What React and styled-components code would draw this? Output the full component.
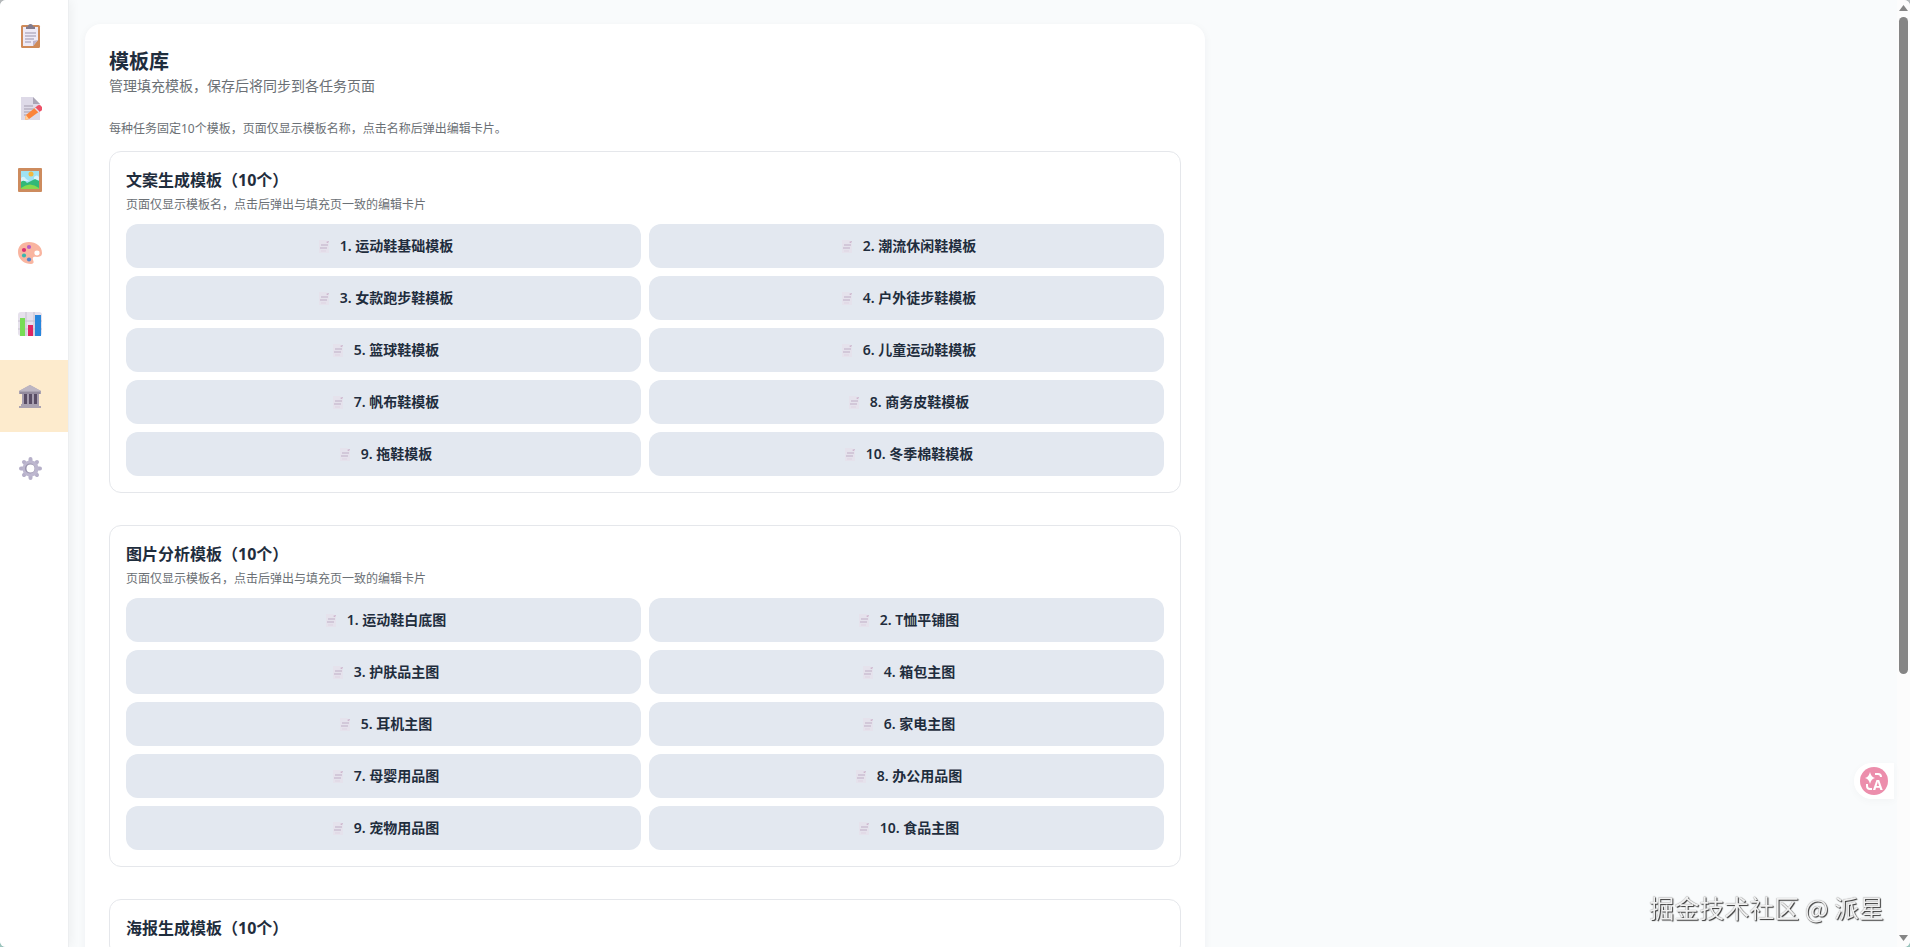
import React, { useState } from 'react';
import styled, { createGlobalStyle } from 'styled-components';

const GlobalStyle = createGlobalStyle`
  * {
    box-sizing: border-box;
  }

  body {
    margin: 0;
    background: linear-gradient(#b4b8ba 50%, #9cc4bd 50%);
    color: #1f2d3d;
    font-family: 'Noto Sans', 'Noto Sans CJK SC', sans-serif;
  }

  button {
    font-family: inherit;
  }
`;

const Layout = styled.div`
  display: flex;
  height: 100vh;
  overflow: hidden;
  border-radius: 6px;
  background: #f9fbfc;
`;

const Sidebar = styled.nav`
  display: flex;
  flex-direction: column;
  flex: none;
  width: 69px;
  background: #ffffff;
  border-right: 1px solid #eceef0;
  box-shadow: 2px 0 10px rgba(0, 0, 0, 0.05);
`;

const NavButton = styled.button`
  display: flex;
  align-items: center;
  height: 72px;
  padding: 0 18px;
  border: none;
  background: ${({ $active }) => ($active ? '#fdebcd' : 'transparent')};
  cursor: pointer;
`;

const Main = styled.main`
  flex: 1;
  padding: 24px 16px;
  overflow-y: auto;
  scrollbar-width: none;
`;

const Card = styled.div`
  max-width: 1120px;
  padding: 24px;
  border-radius: 16px;
  background: #ffffff;
  box-shadow: 0 2px 8px rgba(30, 41, 59, 0.05);
`;

const Title = styled.h1`
  margin: 0;
  font-size: 20px;
  font-weight: 700;
  line-height: 28px;
`;

const Subtitle = styled.p`
  margin: 0 0 24px;
  color: #6b7075;
  font-size: 14px;
  line-height: 19px;
`;

const Note = styled.p`
  margin: 0 0 12px;
  color: #6b7075;
  font-size: 12px;
  line-height: 20px;
`;

const Section = styled.section`
  margin-bottom: 32px;
  padding: 16px;
  border: 1px solid #e5e7eb;
  border-radius: 12px;
`;

const SectionTitle = styled.h2`
  margin: 0;
  font-size: 16px;
  font-weight: 700;
  line-height: 24px;
`;

const SectionText = styled.p`
  margin: 4px 0 10px;
  color: #6b7075;
  font-size: 12px;
  line-height: 18px;
`;

const TemplateGrid = styled.div`
  display: grid;
  grid-template-columns: 1fr 1fr;
  gap: 8px;
`;

const TemplateButton = styled.button`
  display: flex;
  align-items: center;
  justify-content: center;
  gap: 8px;
  height: 44px;
  padding: 0 16px;
  border: none;
  border-radius: 12px;
  background: #e3e8f0;
  color: #1f2d3d;
  font-size: 14px;
  font-weight: 600;
  line-height: 20px;
  cursor: pointer;
`;

const Scrollbar = styled.div`
  display: flex;
  flex-direction: column;
  align-items: center;
  flex: none;
  width: 13px;
  padding: 5px 0 6px;
  background: #fcfcfc;
`;

const Track = styled.div`
  flex: 1;
  width: 9px;
  margin: 6px 0;
`;

const Thumb = styled.div`
  height: 72%;
  border-radius: 5px;
  background: #858585;
`;

const Translate = styled.button`
  position: fixed;
  right: 16px;
  top: 763px;
  width: 40px;
  height: 36px;
  padding: 4px 5px;
  border: none;
  border-radius: 18px 0 0 18px;
  background: #ffffff;
  box-shadow: 0 2px 8px rgba(0, 0, 0, 0.03);
  cursor: pointer;
`;

const Watermark = styled.div`
  position: fixed;
  right: 26px;
  bottom: 22px;
  color: #f0f0f0;
  font-family: 'Noto Sans CJK SC', sans-serif;
  font-size: 25px;
  line-height: 36px;
  text-shadow: 1px 1px 1px #333333, 0 0 1px #777777;
`;

const ClipboardIcon = () => (
  <svg width="24" height="24" viewBox="0 0 24 24" aria-hidden="true">
    <rect x="3" y="1" width="19" height="23" rx="1.500" fill="#cf8a58" />
    <path d="M5 3h15v13l-5 6H5z" fill="#eeeaf6" />
    <path d="M15 22v-5l5-1z" fill="#bdb3cb" />
    <path d="M8 5V2.500h2a2.500 2.500 0 0 1 5 0h2V5z" fill="#827b8d" />
    <path d="M7 9h11M7 12h11M7 15h9M7 18h6" stroke="#9a93ab" />
  </svg>
);

const MemoIcon = () => (
  <svg width="24" height="24" viewBox="0 0 24 24" aria-hidden="true">
    <path d="M3 1h12l7 7v16H3z" fill="#dedae8" />
    <path d="M15 1v7h7z" fill="#aaa5b6" />
    <path d="M6 10h9M6 13h10M6 16h7M6 19h4" stroke="#a49daf" />
    <path d="m8 19 10-8 4 4-11 8-4 1z" fill="#fb843b" />
    <path d="m8 19 3 4-4 1z" fill="#ffd09c" />
    <path d="m17 12 2-2a3 3 0 0 1 4 5l-2 1z" fill="#ed5268" />
    <path d="m17 12 4 4" stroke="#e5dce8" strokeWidth="1.500" />
  </svg>
);

const PictureIcon = () => (
  <svg width="24" height="24" viewBox="0 0 24 24" aria-hidden="true">
    <rect width="24" height="24" rx="1" fill="#cd8b5e" />
    <path d="M3 3h18v18H3z" fill="#9fe2f3" />
    <circle cx="13" cy="6" r="2.500" fill="#f3b83c" />
    <path d="M3 10q3-3 5 1l3 2H3zM16 9q3-3 5 0v3h-5z" fill="#d8f2fb" />
    <path d="M3 14q3-3 6 1l8-4 4 2v8H3z" fill="#32b878" />
    <path d="M3 20q9-7 18 0v1H3z" fill="#87d94e" />
  </svg>
);

const PaletteIcon = () => (
  <svg width="24" height="24" viewBox="0 0 24 24" aria-hidden="true">
    <path
      d="M11 2C4 2 0 6 0 12c0 7 6 12 13 12 3 0 3-2 2-4-1-3 1-4 4-3 3 0 5-1 5-4 0-7-6-11-13-11z"
      fill="#f9b5a0"
    />
    <ellipse cx="19" cy="13" rx="2.600" ry="2.400" fill="#ffffff" />
    <circle cx="11" cy="7" r="2.100" fill="#b55bc5" />
    <circle cx="6" cy="10" r="2.100" fill="#dc3172" />
    <circle cx="6" cy="15.500" r="2.100" fill="#3bb6ae" />
    <circle cx="11" cy="19.500" r="2.100" fill="#5585cb" />
  </svg>
);

const ChartIcon = () => (
  <svg width="24" height="24" viewBox="0 0 24 24" aria-hidden="true">
    <rect width="24" height="24" rx="3" fill="#e6e1ec" />
    <path d="M0 9h24M0 17h24M8 0v24M16 0v24" stroke="#c6c0cf" />
    <path d="M2 6h5v18H2z" fill="#78dc55" />
    <path d="M10 13h5v11h-5z" fill="#dd2563" />
    <path d="M17 3h6v21h-6z" fill="#2786dc" />
  </svg>
);

const MuseumIcon = () => (
  <svg width="24" height="24" viewBox="0 0 24 24" aria-hidden="true">
    <path d="M4 9h16v12H4z" fill="#594d65" />
    <path d="M12 1 23 7v3H1V7z" fill="#aaa3b2" />
    <path d="m12 1 11 6H1z" fill="#bcb5c2" />
    <path d="M5 10v11M10 10v11M15 10v11M20 10v11" stroke="#a69daf" strokeWidth="2" />
    <path d="M3 20h18v2h2v2H1v-2h2z" fill="#aaa2b1" />
    <path d="M2 9h20" stroke="#7d7388" />
  </svg>
);

const GearIcon = () => (
  <svg width="24" height="24" viewBox="0 0 24 24" aria-hidden="true">
    <path
      d="M12.500 3v19M3 12.500h19M6 6l13 13M19 6 6 19"
      stroke="#b6b0c9"
      strokeWidth="4"
      strokeLinecap="round"
    />
    <circle cx="12.500" cy="12.500" r="8" fill="#bdb7cf" />
    <circle cx="12" cy="12.500" r="5" fill="#9892ac" />
    <circle cx="12.500" cy="12.500" r="4" fill="#ffffff" />
  </svg>
);

const FileIcon = () => (
  <svg width="18" height="18" viewBox="0 0 18 18" aria-hidden="true">
    <path d="M5 3h7l3 3v10H5z" fill="#e5e2ec" />
    <path d="M7 8h7M6 11h7" stroke="#bfaec6" />
    <path d="M7 14h5" stroke="#dfd3e2" />
    <path d="m12 5 3-1-1 2z" fill="#c8a9c4" />
  </svg>
);

const TranslateIcon = () => (
  <svg width="28" height="28" viewBox="0 0 28 28" aria-hidden="true">
    <circle cx="14" cy="14" r="14" fill="#ec8eac" />
    <path d="M10 5q1 5 5 6-4 1-5 6-1-5-5-6 4-1 5-6z" fill="#ffffff" />
    <path
      d="M15 7h3q3 0 3 3M7 17v2q0 3 3 3h2"
      fill="none"
      stroke="#ffffff"
      strokeWidth="2"
    />
    <text x="13" y="23" fill="#ffffff" fontFamily="Open Sans, sans-serif" fontSize="14" fontWeight="700">
      A
    </text>
  </svg>
);

const navItems = [
  { label: '任务', Icon: ClipboardIcon },
  { label: '文案生成', Icon: MemoIcon },
  { label: '图片分析', Icon: PictureIcon },
  { label: '海报生成', Icon: PaletteIcon },
  { label: '数据', Icon: ChartIcon },
  { label: '模板库', Icon: MuseumIcon },
  { label: '设置', Icon: GearIcon },
];

const sections = [
  {
    title: '文案生成模板',
    templates: [
      '运动鞋基础模板',
      '潮流休闲鞋模板',
      '女款跑步鞋模板',
      '户外徒步鞋模板',
      '篮球鞋模板',
      '儿童运动鞋模板',
      '帆布鞋模板',
      '商务皮鞋模板',
      '拖鞋模板',
      '冬季棉鞋模板',
    ],
  },
  {
    title: '图片分析模板',
    templates: [
      '运动鞋白底图',
      'T恤平铺图',
      '护肤品主图',
      '箱包主图',
      '耳机主图',
      '家电主图',
      '母婴用品图',
      '办公用品图',
      '宠物用品图',
      '食品主图',
    ],
  },
  { title: '海报生成模板', templates: [] },
];

function App() {
  const [active, setActive] = useState('模板库');

  return (
    <>
      <GlobalStyle />
      <Layout>
        <Sidebar>
          {navItems.map(({ label, Icon }) => (
            <NavButton
              key={label}
              aria-label={label}
              $active={label === active}
              onClick={() => setActive(label)}
            >
              <Icon />
            </NavButton>
          ))}
        </Sidebar>
        <Main>
          <Card>
            <Title>模板库</Title>
            <Subtitle>管理填充模板，保存后将同步到各任务页面</Subtitle>
            <Note>每种任务固定10个模板，页面仅显示模板名称，点击名称后弹出编辑卡片。</Note>
            {sections.map(({ title, templates }) => (
              <Section key={title}>
                <SectionTitle>{title}（10个）</SectionTitle>
                {templates.length > 0 && (
                  <>
                    <SectionText>页面仅显示模板名，点击后弹出与填充页一致的编辑卡片</SectionText>
                    <TemplateGrid>
                      {templates.map((name, index) => (
                        <TemplateButton key={name}>
                          <FileIcon />
                          {`${index + 1}. ${name}`}
                        </TemplateButton>
                      ))}
                    </TemplateGrid>
                  </>
                )}
              </Section>
            ))}
          </Card>
        </Main>
        <Scrollbar aria-hidden="true">
          <svg width="9" height="6" viewBox="0 0 9 6">
            <path d="M4.500 0 9 6H0z" fill="#858585" />
          </svg>
          <Track>
            <Thumb />
          </Track>
          <svg width="9" height="6" viewBox="0 0 9 6">
            <path d="M0 0h9L4.500 6z" fill="#858585" />
          </svg>
        </Scrollbar>
      </Layout>
      <Translate aria-label="翻译">
        <TranslateIcon />
      </Translate>
      <Watermark>掘金技术社区 @ 派星</Watermark>
    </>
  );
}

export default App;
